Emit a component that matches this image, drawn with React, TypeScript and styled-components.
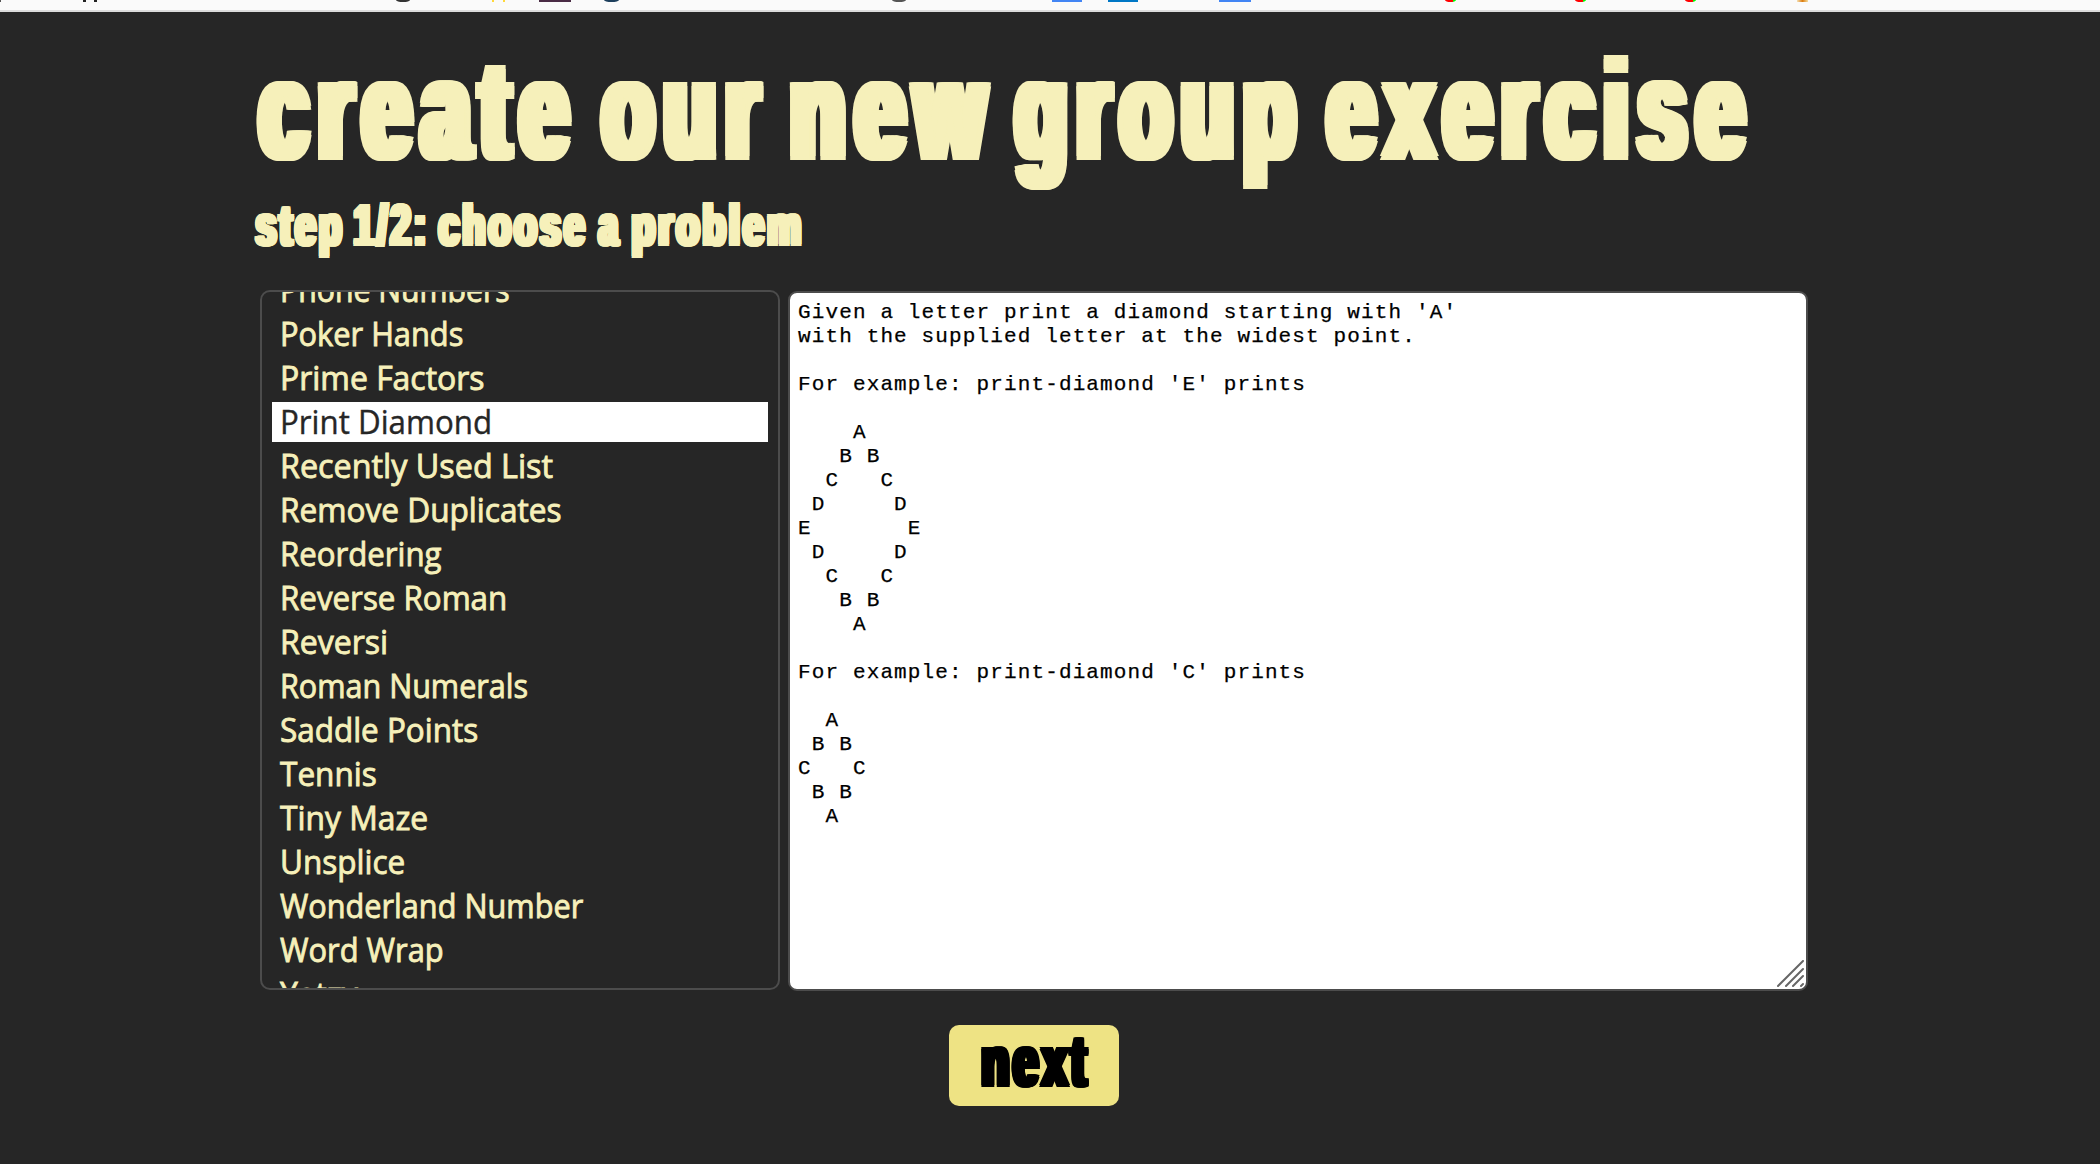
import React, { useLayoutEffect, useRef, useState } from "react";
import styled, { createGlobalStyle, css } from "styled-components";

const GlobalStyle = createGlobalStyle`
  body { margin: 0; background: #262626; }
`;

const Page = styled.div`
  display: flex;
  flex-direction: column;
  width: 2100px;
  height: 1164px;
  overflow: hidden;
  background: #262626;
`;

const BookmarkBar = styled.div`
  position: relative;
  flex: none;
  height: 10px;
  background: #fafafa;
  border-bottom: 2px solid #dcdcdc;
`;

const Favicon = styled.i<{ $x: number; $w: number; $color: string; $round?: boolean }>`
  position: absolute;
  top: 0;
  left: ${(p) => p.$x}px;
  width: ${(p) => p.$w}px;
  height: 2px;
  background: ${(p) => p.$color};
  border-radius: ${(p) => (p.$round ? "0 0 50% 50% / 0 0 100% 100%" : 0)};
`;

const Main = styled.main`
  display: flex;
  flex-direction: column;
  padding: 37px 0 0 254px;
`;

const widen = [-0.075, -0.06, -0.045, -0.03, -0.015, 0, 0.015, 0.03, 0.045, 0.06, 0.075]
  .flatMap((x) => [`${x}em -0.012em 0`, `${x}em 0.012em 0`])
  .join(", ");

/* Heavy condensed display face: bold sans with its stems widened sideways. */
const poster = css`
  font-family: "Liberation Sans", Arial, sans-serif;
  font-weight: 700;
  text-shadow: ${widen};
`;

const Title = styled.h1`
  ${poster}
  display: flex;
  height: 120px;
  margin: 0;
  font-size: 140px;
  line-height: 122px;
  letter-spacing: 0.124em;
  color: #f6f0ba;
`;

const Step = styled.h2`
  ${poster}
  display: flex;
  height: 60px;
  margin: 29px 0 0;
  font-size: 58px;
  line-height: 53px;
  letter-spacing: 0.088em;
  color: #f6f0ba;
`;

const Slot = styled.span<{ $width: number; $before: number }>`
  display: block;
  flex: none;
  width: ${(p) => p.$width}px;
  margin-left: ${(p) => p.$before}px;
  white-space: pre;
`;

const Glyphs = styled.span<{ $lead: number }>`
  display: inline-block;
  padding-left: ${(p) => p.$lead}em;
  transform-origin: 0 50%;
`;

interface FitProps {
  text: string;
  width: number;
  before?: number;
  lead?: number;
}

function Fit({ text, width, before = 0, lead = 0 }: FitProps) {
  const ref = useRef<HTMLSpanElement>(null);
  const [scale, setScale] = useState(1);
  useLayoutEffect(() => {
    if (ref.current) setScale(width / ref.current.offsetWidth);
  }, [text, width]);
  return (
    <Slot $width={width} $before={before}>
      <Glyphs ref={ref} $lead={lead} style={{ transform: `scaleX(${scale})` }}>{text}</Glyphs>
    </Slot>
  );
}

const Panels = styled.div`
  display: flex;
  align-items: flex-start;
  gap: 8px;
  margin: 32px 0 0 6px;
`;

const List = styled.div`
  box-sizing: border-box;
  display: flex;
  flex-direction: column;
  width: 520px;
  height: 700px;
  padding: 0 10px;
  overflow: hidden;
  border: 2px solid #4c4c4c;
  border-radius: 10px;
`;

const Rows = styled.div`
  display: flex;
  flex-direction: column;
  gap: 4px;
  margin-top: -22px;
`;

const Row = styled.div<{ $selected: boolean }>`
  height: 40px;
  padding-left: 8px;
  font: 400 33.5px/38px "Open Sans", sans-serif;
  color: ${(p) => (p.$selected ? "#262626" : "#f6f0ba")};
  background: ${(p) => (p.$selected ? "#fff" : "transparent")};
  -webkit-text-stroke: ${(p) => (p.$selected ? 0.4 : 0.9)}px currentColor;
`;

const Editor = styled.div`
  position: relative;
  box-sizing: border-box;
  width: 1020px;
  height: 700px;
  margin-top: 1px;
  padding: 8px;
  border: 2px solid #4c4c4c;
  border-radius: 9px;
  background: #fff;
`;

const Instructions = styled.pre`
  margin: 0;
  font: 21px/24px "Liberation Mono", monospace;
  letter-spacing: 1.13px;
  color: #000;
  -webkit-text-stroke: 0.25px #000;
`;

const Grip = styled.svg`
  position: absolute;
  right: 1px;
  bottom: 1px;
`;

const NextButton = styled.button`
  ${poster}
  display: flex;
  width: 170px;
  height: 81px;
  margin: 34px 0 0 695px;
  padding: 0 0 0 30px;
  border: 0;
  border-radius: 10px;
  background: #eee384;
  color: #000;
  font-size: 72px;
  line-height: 73px;
  letter-spacing: 0.09em;
  text-align: left;
`;

const favicons = [
  { x: 0, w: 1, color: "#555" },
  { x: 83, w: 3, color: "#222" },
  { x: 94, w: 3, color: "#222" },
  { x: 396, w: 14, color: "#333", round: true },
  { x: 492, w: 2, color: "#ffd83a" },
  { x: 503, w: 2, color: "#ffd83a" },
  { x: 539, w: 32, color: "#4a2c45" },
  { x: 604, w: 15, color: "#1d3f5c", round: true },
  { x: 892, w: 14, color: "#555", round: true },
  { x: 1052, w: 30, color: "#4285f4" },
  { x: 1108, w: 30, color: "#0077c5" },
  { x: 1219, w: 32, color: "#4285f4" },
  { x: 1445, w: 11, color: "linear-gradient(90deg, #f00 70%, #0f0 70%)", round: true },
  { x: 1575, w: 11, color: "linear-gradient(90deg, #f00 70%, #0f0 70%)", round: true },
  { x: 1685, w: 11, color: "linear-gradient(90deg, #f00 70%, #0f0 70%)", round: true },
  { x: 1797, w: 11, color: "linear-gradient(90deg, #f6e2b8, #dc7d10 50%, #f6dfa0)" },
];

const titleWords = [
  { text: "create", width: 325 },
  { text: "our", width: 172, before: 18 },
  { text: "new", width: 210, before: 16 },
  { text: "group", width: 295, before: 15 },
  { text: "exercise", width: 433, before: 17 },
];

const stepWords = [
  { text: "step", width: 91 },
  { text: "1/2:", width: 77, before: 7 },
  { text: "choose", width: 151, before: 8 },
  { text: "a", width: 24, before: 9 },
  { text: "problem", width: 174, before: 9 },
];

const problems = [
  { text: "Phone Numbers", width: 230 },
  { text: "Poker Hands", width: 183 },
  { text: "Prime Factors", width: 205 },
  { text: "Print Diamond", width: 212 },
  { text: "Recently Used List", width: 273 },
  { text: "Remove Duplicates", width: 282 },
  { text: "Reordering", width: 162 },
  { text: "Reverse Roman", width: 227 },
  { text: "Reversi", width: 108 },
  { text: "Roman Numerals", width: 248 },
  { text: "Saddle Points", width: 198 },
  { text: "Tennis", width: 97 },
  { text: "Tiny Maze", width: 148 },
  { text: "Unsplice", width: 125 },
  { text: "Wonderland Number", width: 303 },
  { text: "Word Wrap", width: 164 },
  { text: "Yatzy", width: 78 },
];

const instructions = `Given a letter print a diamond starting with 'A'
with the supplied letter at the widest point.

For example: print-diamond 'E' prints

    A
   B B
  C   C
 D     D
E       E
 D     D
  C   C
   B B
    A

For example: print-diamond 'C' prints

  A
 B B
C   C
 B B
  A`;

export default function App() {
  const [selected, setSelected] = useState("Print Diamond");
  return (
    <Page>
      <GlobalStyle />
      <BookmarkBar>
        {favicons.map((f) => (
          <Favicon key={f.x} $x={f.x} $w={f.w} $color={f.color} $round={f.round} />
        ))}
      </BookmarkBar>
      <Main>
        <Title>{titleWords.map((w) => <Fit key={w.text} lead={0.065} {...w} />)}</Title>
        <Step>{stepWords.map((w) => <Fit key={w.text} lead={0.05} {...w} />)}</Step>
        <Panels>
          <List>
            <Rows>
              {problems.map((p) => (
                <Row key={p.text} $selected={p.text === selected} onClick={() => setSelected(p.text)}>
                  <Fit {...p} />
                </Row>
              ))}
            </Rows>
          </List>
          <Editor>
            <Instructions>{instructions}</Instructions>
            <Grip width="28" height="28" viewBox="0 0 28 28" stroke="#666" strokeWidth="2" strokeLinecap="round">
              <path d="M1 26L26 1M9 26L26 9M16 26L26 16M24 26L26 24" />
            </Grip>
          </Editor>
        </Panels>
        <NextButton><Fit text="next" width={111} lead={0.06} /></NextButton>
      </Main>
    </Page>
  );
}
